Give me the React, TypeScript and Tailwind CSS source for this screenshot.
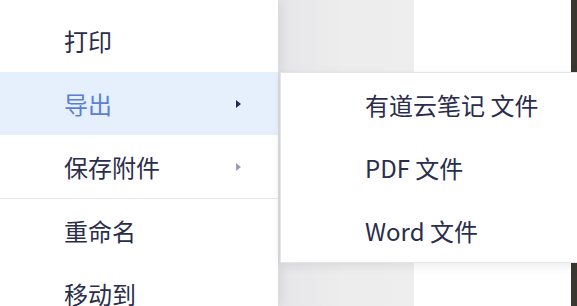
import React from 'react'

const font = { fontFamily: '"Noto Sans CJK SC", "Noto Sans", sans-serif' }

type Item = { label: string; arrow?: 'dark' | 'gray'; active?: boolean }

const mainItems: Item[] = [
    { label: '打印' },
    { label: '导出', arrow: 'dark', active: true },
    { label: '保存附件', arrow: 'gray' },
]

const moreItems: Item[] = [{ label: '重命名' }, { label: '移动到' }]

const subItems = ['有道云笔记 文件', 'PDF 文件', 'Word 文件']

const MenuRow = ({ item }: { item: Item }) => (
    <div className={`shrink-0 flex items-center h-[63px] pl-[64px] pr-[37px] pt-[1px] ${item.active ? 'bg-[#e6f0fd] text-[#5a7fd3]' : 'text-[#2a2d4c]'}`}>
        <span className="flex-1 text-[24px] leading-none">{item.label}</span>
        {item.arrow && (
            <span
                className={`w-0 h-0 border-y-[4px] border-y-transparent border-l-[5px] ${item.arrow === 'dark' ? 'border-l-[#262a4d]' : 'border-l-[#9a9db3]'}`}
            />
        )}
    </div>
)

const App = () => {
    return (
        <div className="relative w-[577px] h-[306px] overflow-hidden flex bg-white" style={font}>
            {/* main context menu */}
            <div className="w-[278px] shrink-0 h-full bg-white shadow-[3px_0_10px_rgba(0,0,0,0.07)] z-10 flex flex-col pt-[9px]">
                {mainItems.map((it) => (
                    <MenuRow key={it.label} item={it} />
                ))}
                <div className="shrink-0 h-px bg-[#e6e6ea]" />
                {moreItems.map((it) => (
                    <MenuRow key={it.label} item={it} />
                ))}
            </div>

            {/* page behind */}
            <div className="w-[136px] shrink-0 h-full bg-gradient-to-r from-[#e6e6e8] via-[#ededee] to-[#eeeeef]" />
            <div className="flex-1 h-full bg-white" />
            <div className="w-[6px] shrink-0 h-full bg-[#3b3731]" />

            {/* submenu */}
            <div className="absolute left-[280px] top-[72px] w-[310px] bg-white border border-[#e3e4e8] shadow-[0_3px_10px_rgba(0,0,0,0.08)] z-20">
                {subItems.map((s) => (
                    <div key={s} className="h-[63px] flex items-center pl-[84px] pt-[1px] text-[24px] leading-none text-[#2a2d4c]">
                        {s}
                    </div>
                ))}
            </div>
        </div>
    )
}

export default App
